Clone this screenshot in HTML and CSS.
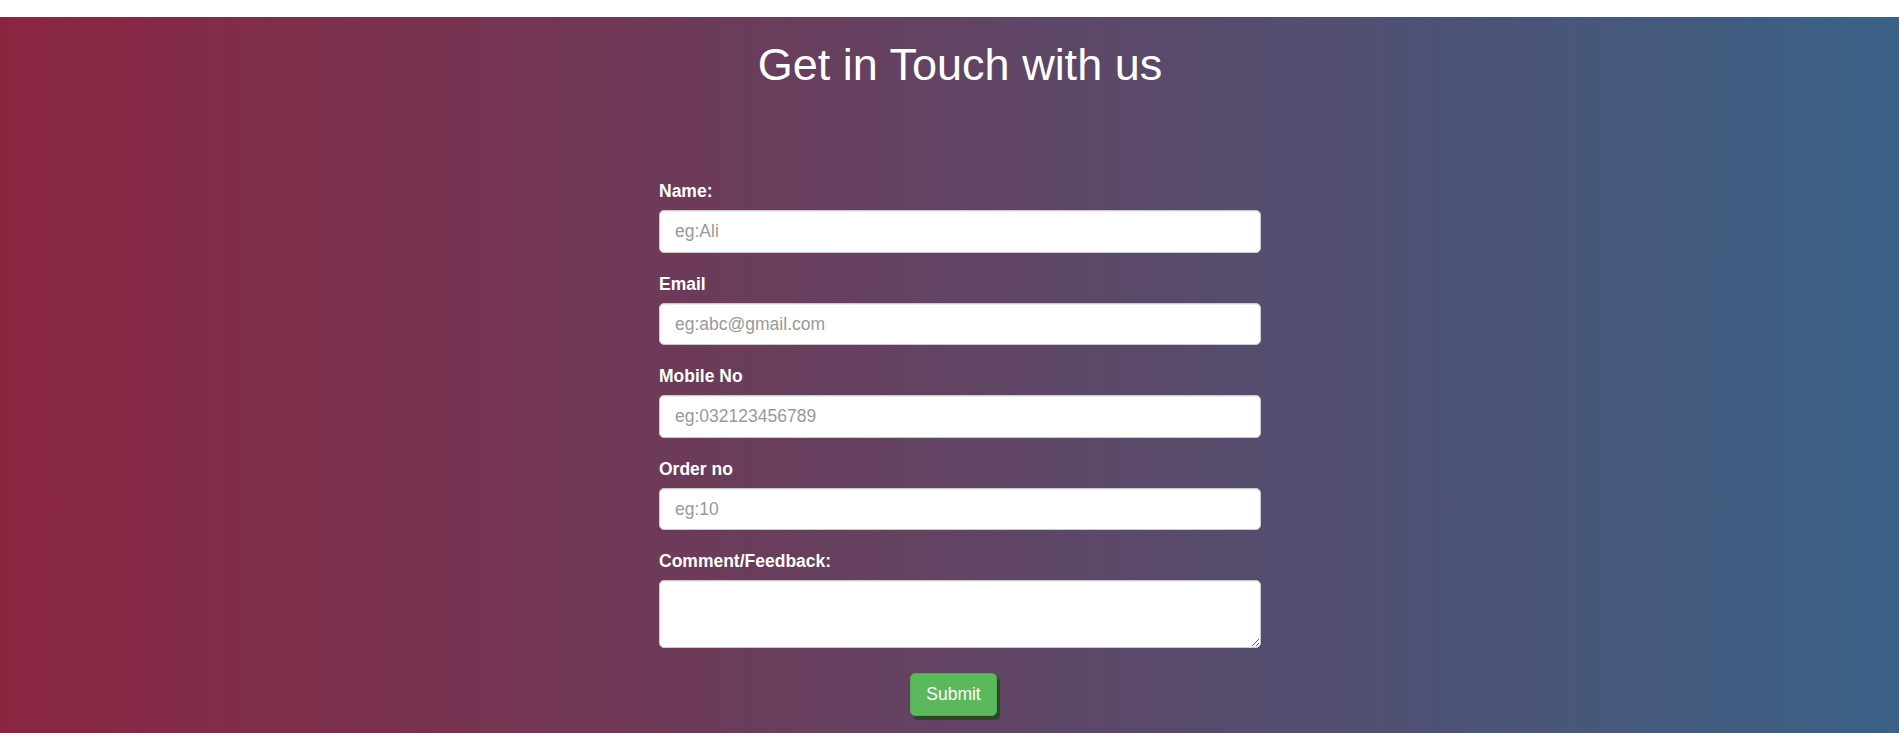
FILE: index.html
```html
<!DOCTYPE html>
<html lang="en">
<head>
<meta charset="utf-8">
<title>Get in Touch with us</title>
<link rel="stylesheet" href="styles.css">
</head>
<body>
<div class="topbar"></div>
<section class="hero">
  <h1 class="title">Get in Touch with us</h1>
  <form class="contact">
    <div class="group">
      <label class="lbl" for="name">Name:</label>
      <input class="field" id="name" type="text" placeholder="eg:Ali">
    </div>
    <div class="group">
      <label class="lbl" for="email">Email</label>
      <input class="field" id="email" type="text" placeholder="eg:abc@gmail.com">
    </div>
    <div class="group">
      <label class="lbl" for="mobile">Mobile No</label>
      <input class="field" id="mobile" type="text" placeholder="eg:032123456789">
    </div>
    <div class="group">
      <label class="lbl" for="order">Order no</label>
      <input class="field" id="order" type="text" placeholder="eg:10">
    </div>
    <div class="group">
      <label class="lbl" for="comment">Comment/Feedback:</label>
      <textarea class="field area" id="comment" rows="2"></textarea>
    </div>
    <div class="actions">
      <button class="btn" type="button">Submit</button>
    </div>
  </form>
</section>
</body>
</html>
```
FILE: styles.css
```css
* { box-sizing: border-box; }
html, body { margin: 0; padding: 0; }
body {
  font-family: "Liberation Sans", Arial, sans-serif;
  background: #fff;
  overflow: hidden;
}
.topbar { height: 17px; background: #fff; }
.hero {
  min-height: 716px;
  background: linear-gradient(to right, #8a2540, #3a6186);
  padding: 23px 0 40px 21px;
  display: flex;
  flex-direction: column;
  align-items: center;
}
.title {
  margin: 0;
  font-size: 45px;
  line-height: 49.5px;
  font-weight: normal;
  color: #fff;
}
.contact {
  width: 602px;
  margin-top: 89.5px;
  display: flex;
  flex-direction: column;
  gap: 18.75px;
}
.group { display: flex; flex-direction: column; }
.lbl {
  font-size: 17.5px;
  line-height: 25px;
  font-weight: bold;
  color: #fff;
  margin-bottom: 6.25px;
}
.field {
  width: 100%;
  height: 42.5px;
  padding: 7.5px 15px;
  font-family: "Liberation Sans", Arial, sans-serif;
  font-size: 17.5px;
  line-height: 25px;
  color: #555;
  background: #fff;
  border: 1.25px solid #ccc;
  border-radius: 5px;
  box-shadow: inset 0 1px 1px rgba(0,0,0,0.075);
}
.field::placeholder { color: #999; }
.area { height: 67.5px; resize: vertical; }
.actions {
  display: flex;
  justify-content: center;
  padding-top: 6.5px;
  padding-right: 13px;
}
.btn {
  height: 42.5px;
  padding: 7.5px 15px;
  font-family: "Liberation Sans", Arial, sans-serif;
  font-size: 17.5px;
  line-height: 25px;
  color: #fff;
  background: #5cb85c;
  border: 1.25px solid #4cae4c;
  border-radius: 5px;
  box-shadow: 3px 4px 1px #2a472a;
}
```
